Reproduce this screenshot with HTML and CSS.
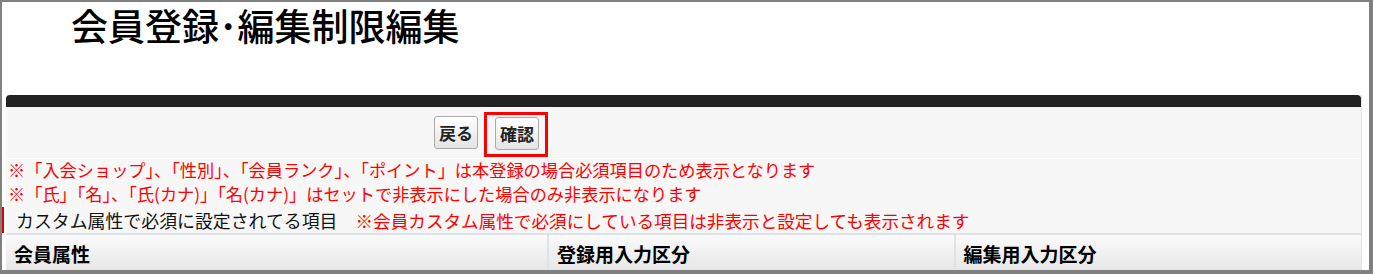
FILE: index.html
```html
<!DOCTYPE html>
<html lang="ja">
<head>
    <meta charset="UTF-8">
    <title>会員登録・編集制限編集</title>
    <link rel="stylesheet" href="styles.css">
</head>
<body>
    <h1 class="page-title">会員登録･編集制限編集</h1>

    <div class="panel">
        <div class="panel-bar"></div>

        <div class="btn-row">
            <button class="btn" type="button">戻る</button>
            <span class="mark">
                <button class="btn" type="button">確認</button>
            </span>
        </div>

        <div class="notes">
            <p class="note">※「入会ショップ」、「性別」、「会員ランク」、「ポイント」は本登録の場合必須項目のため表示となります</p>
            <p class="note">※「氏」「名」、「氏(カナ)」「名(カナ)」はセットで非表示にした場合のみ非表示になります</p>
            <p class="note note-head">
                <span class="note-title">カスタム属性で必須に設定されてる項目</span>
                <span class="note-warn">※会員カスタム属性で必須にしている項目は非表示と設定しても表示されます</span>
            </p>
        </div>

        <table class="attr-table">
            <thead>
                <tr>
                    <th class="col-name">会員属性</th>
                    <th>登録用入力区分</th>
                    <th>編集用入力区分</th>
                </tr>
            </thead>
        </table>
    </div>
</body>
</html>
```

FILE: styles.css
```css
* {
    box-sizing: border-box;
}

html, body {
    margin: 0;
    padding: 0;
}

body {
    height: 274px;
    overflow: hidden;
    background: #fff;
    border-style: solid;
    border-color: #808080;
    border-width: 2px 4px 4px 2px;
    font-family: "Noto Sans CJK JP", sans-serif;
    color: #000;
}

.page-title {
    margin: 0;
    height: 93px;
    padding: 0 0 0 69px;
    font-size: 37px;
    font-weight: 500;
    line-height: 52px;
    margin-top: -3px;
    margin-bottom: 3px;
}

.panel {
    margin: 0 7px 0 4px;
    background: #f7f7f7;
    border-right: 1px solid #e4e4e4;
}

.panel-bar {
    height: 12px;
    background: #222;
    border-radius: 4px 4px 0 0;
}

.btn-row {
    height: 52px;
    display: flex;
    align-items: center;
    padding-left: 428px;
    border-bottom: 1px solid #fff;
}

.btn {
    height: 33px;
    padding: 0 4px;
    font-family: inherit;
    font-size: 17px;
    font-weight: bold;
    color: #222;
    background: linear-gradient(#fff, #e4e4e4);
    border: 1px solid #aaa;
    border-radius: 3px;
}

.mark {
    display: inline-flex;
    margin-left: 6px;
    margin-top: 4px;
    padding: 2px 6px 4px 8px;
    border: 3px solid #f00;
}

.notes {
    padding: 0 0 0 2px;
    border-bottom: 2px solid #dde3e6;
}

.note {
    margin: 0;
    height: 24px;
    font-size: 17.2px;
    line-height: 22px;
    color: #f00;
    white-space: nowrap;
}

.note-head {
    height: 26px;
    margin-left: -6px;
    padding-left: 12px;
    border-left: 2px solid #d00;
    font-size: 17.9px;
    line-height: 26px;
}

.note-title {
    color: #111;
    margin-right: 14px;
}

.note-warn {
    font-size: 17.6px;
}

.attr-table {
    width: 100%;
    border-collapse: collapse;
}

.attr-table th {
    width: 30%;
    height: 36px;
    padding: 0 8px;
    text-align: left;
    font-size: 19px;
    font-weight: bold;
    background: linear-gradient(#fbfbfb, #e6e6e6);
    border-left: 2px solid #dde3e6;
}

.attr-table th.col-name {
    width: 40%;
    border-left: none;
}
```
